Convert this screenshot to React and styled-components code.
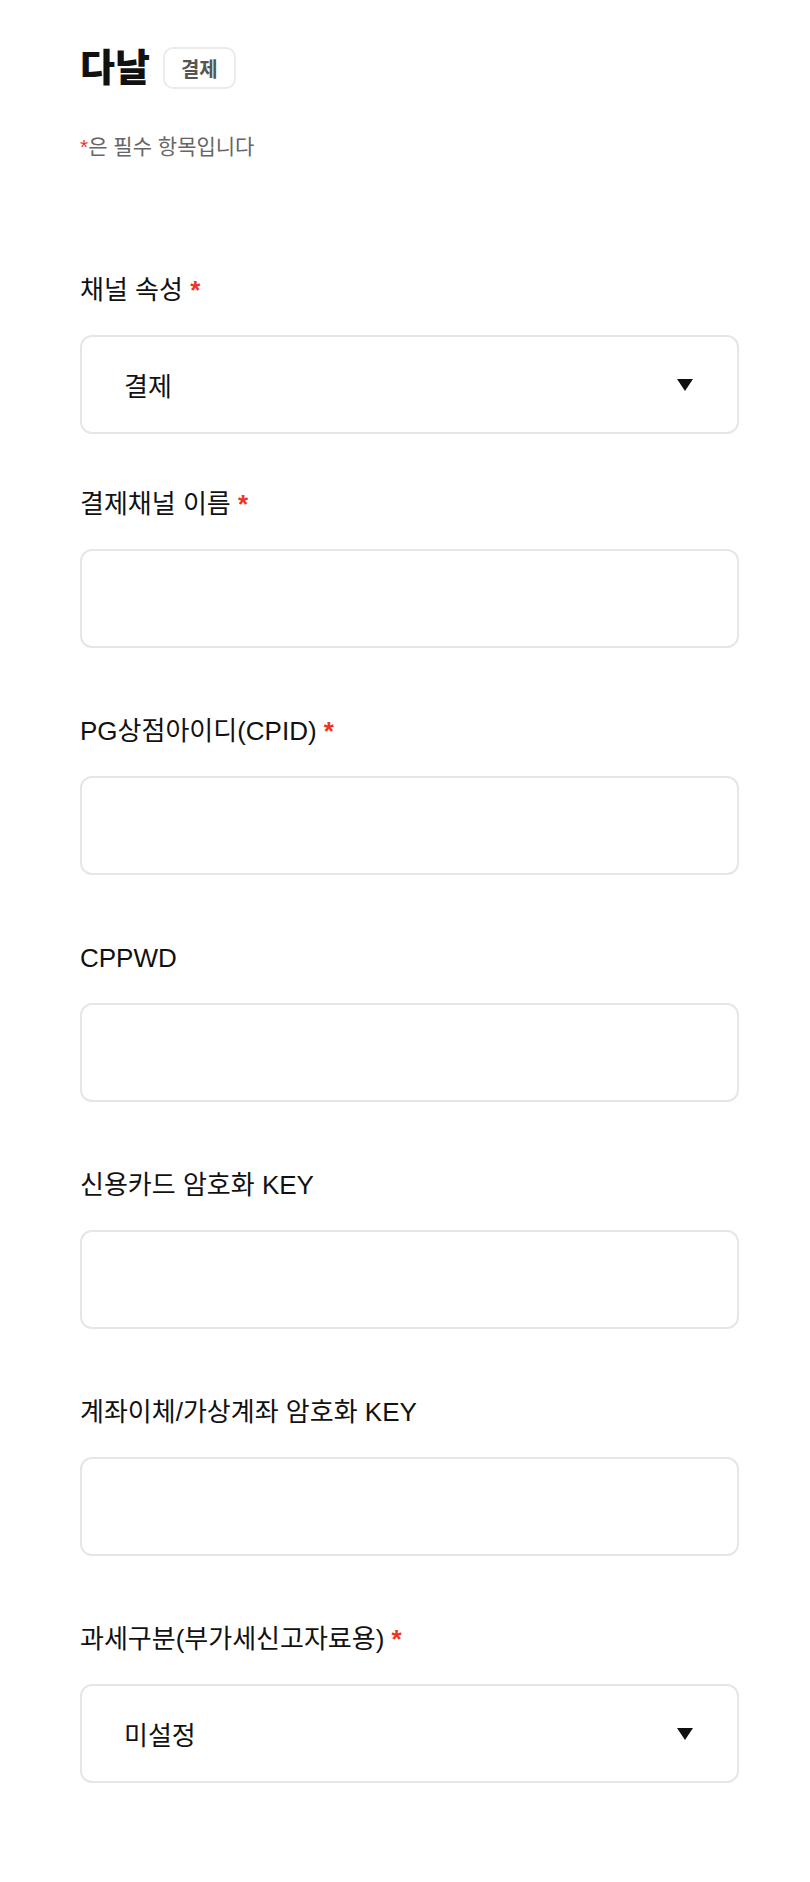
import React from "react";
import styled, { createGlobalStyle } from "styled-components";

const GlobalStyle = createGlobalStyle`
  html, body {
    margin: 0;
    padding: 0;
    background: #ffffff;
  }
  body {
    font-family: "Liberation Sans", "Noto Sans CJK KR", sans-serif;
    color: #111111;
  }
  * { box-sizing: border-box; }
`;

const Page = styled.div`
  padding: 47px 0 99px 80px;
`;

const Content = styled.div`
  width: 659px;
`;

const TitleRow = styled.div`
  display: flex;
  align-items: center;
  gap: 13px;
  height: 42px;
`;

const Title = styled.h1`
  margin: 0;
  font-size: 38px;
  line-height: 42px;
  font-weight: 800;
  color: #111111;
`;

const Badge = styled.span`
  display: inline-flex;
  align-items: center;
  height: 42px;
  padding: 0 16px;
  border: 2px solid #ebebeb;
  border-radius: 10px;
  font-size: 20px;
  font-weight: 700;
  color: #555555;
`;

const Notice = styled.p`
  margin: 44px 0 0;
  font-size: 21px;
  line-height: 27px;
  color: #666666;
`;

const Req = styled.span`
  color: #ee3524;
  font-weight: ${(p) => (p.$bold ? 700 : 400)};
`;

const Form = styled.form`
  display: flex;
  flex-direction: column;
  margin-top: 113px;
`;

const Field = styled.div`
  display: flex;
  flex-direction: column;
  gap: 28px;
  margin-bottom: ${(p) => (p.$compact ? 53 : 66)}px;
  &:last-child {
    margin-bottom: 0;
  }
`;

const Label = styled.label`
  font-size: 26px;
  line-height: 34px;
  color: #111111;
`;

const Input = styled.input`
  display: block;
  width: 100%;
  height: 99px;
  border: 2px solid #e6e6e6;
  border-radius: 12px;
  padding: 0 42px;
  font-family: inherit;
  font-size: 26px;
  color: #111111;
  background: #ffffff;
  outline: none;
`;

const SelectBox = styled.div`
  display: flex;
  align-items: center;
  justify-content: space-between;
  height: 99px;
  border: 2px solid #e6e6e6;
  border-radius: 12px;
  padding: 0 44px 0 42px;
  font-size: 26px;
  color: #111111;
  background: #ffffff;
  cursor: pointer;
`;

const Caret = () => (
  <svg width="16" height="12" viewBox="0 0 16 12" aria-hidden="true">
    <polygon points="0,0 16,0 8,12" fill="#111111" />
  </svg>
);

const fields = [
  { label: "채널 속성", required: true, type: "select", value: "결제", compact: true },
  { label: "결제채널 이름", required: true, type: "input" },
  { label: "PG상점아이디(CPID)", required: true, type: "input" },
  { label: "CPPWD", required: false, type: "input" },
  { label: "신용카드 암호화 KEY", required: false, type: "input" },
  { label: "계좌이체/가상계좌 암호화 KEY", required: false, type: "input" },
  { label: "과세구분(부가세신고자료용)", required: true, type: "select", value: "미설정" },
];

export default function App() {
  return (
    <>
      <GlobalStyle />
      <Page>
        <Content>
          <TitleRow>
            <Title>다날</Title>
            <Badge>결제</Badge>
          </TitleRow>
          <Notice>
            <Req>*</Req>은 필수 항목입니다
          </Notice>
          <Form onSubmit={(e) => e.preventDefault()}>
            {fields.map((f) => (
              <Field key={f.label} $compact={f.compact}>
                <Label>
                  {f.label}
                  {f.required && (
                    <>
                      {" "}
                      <Req $bold>*</Req>
                    </>
                  )}
                </Label>
                {f.type === "select" ? (
                  <SelectBox role="combobox">
                    <span>{f.value}</span>
                    <Caret />
                  </SelectBox>
                ) : (
                  <Input type="text" />
                )}
              </Field>
            ))}
          </Form>
        </Content>
      </Page>
    </>
  );
}
